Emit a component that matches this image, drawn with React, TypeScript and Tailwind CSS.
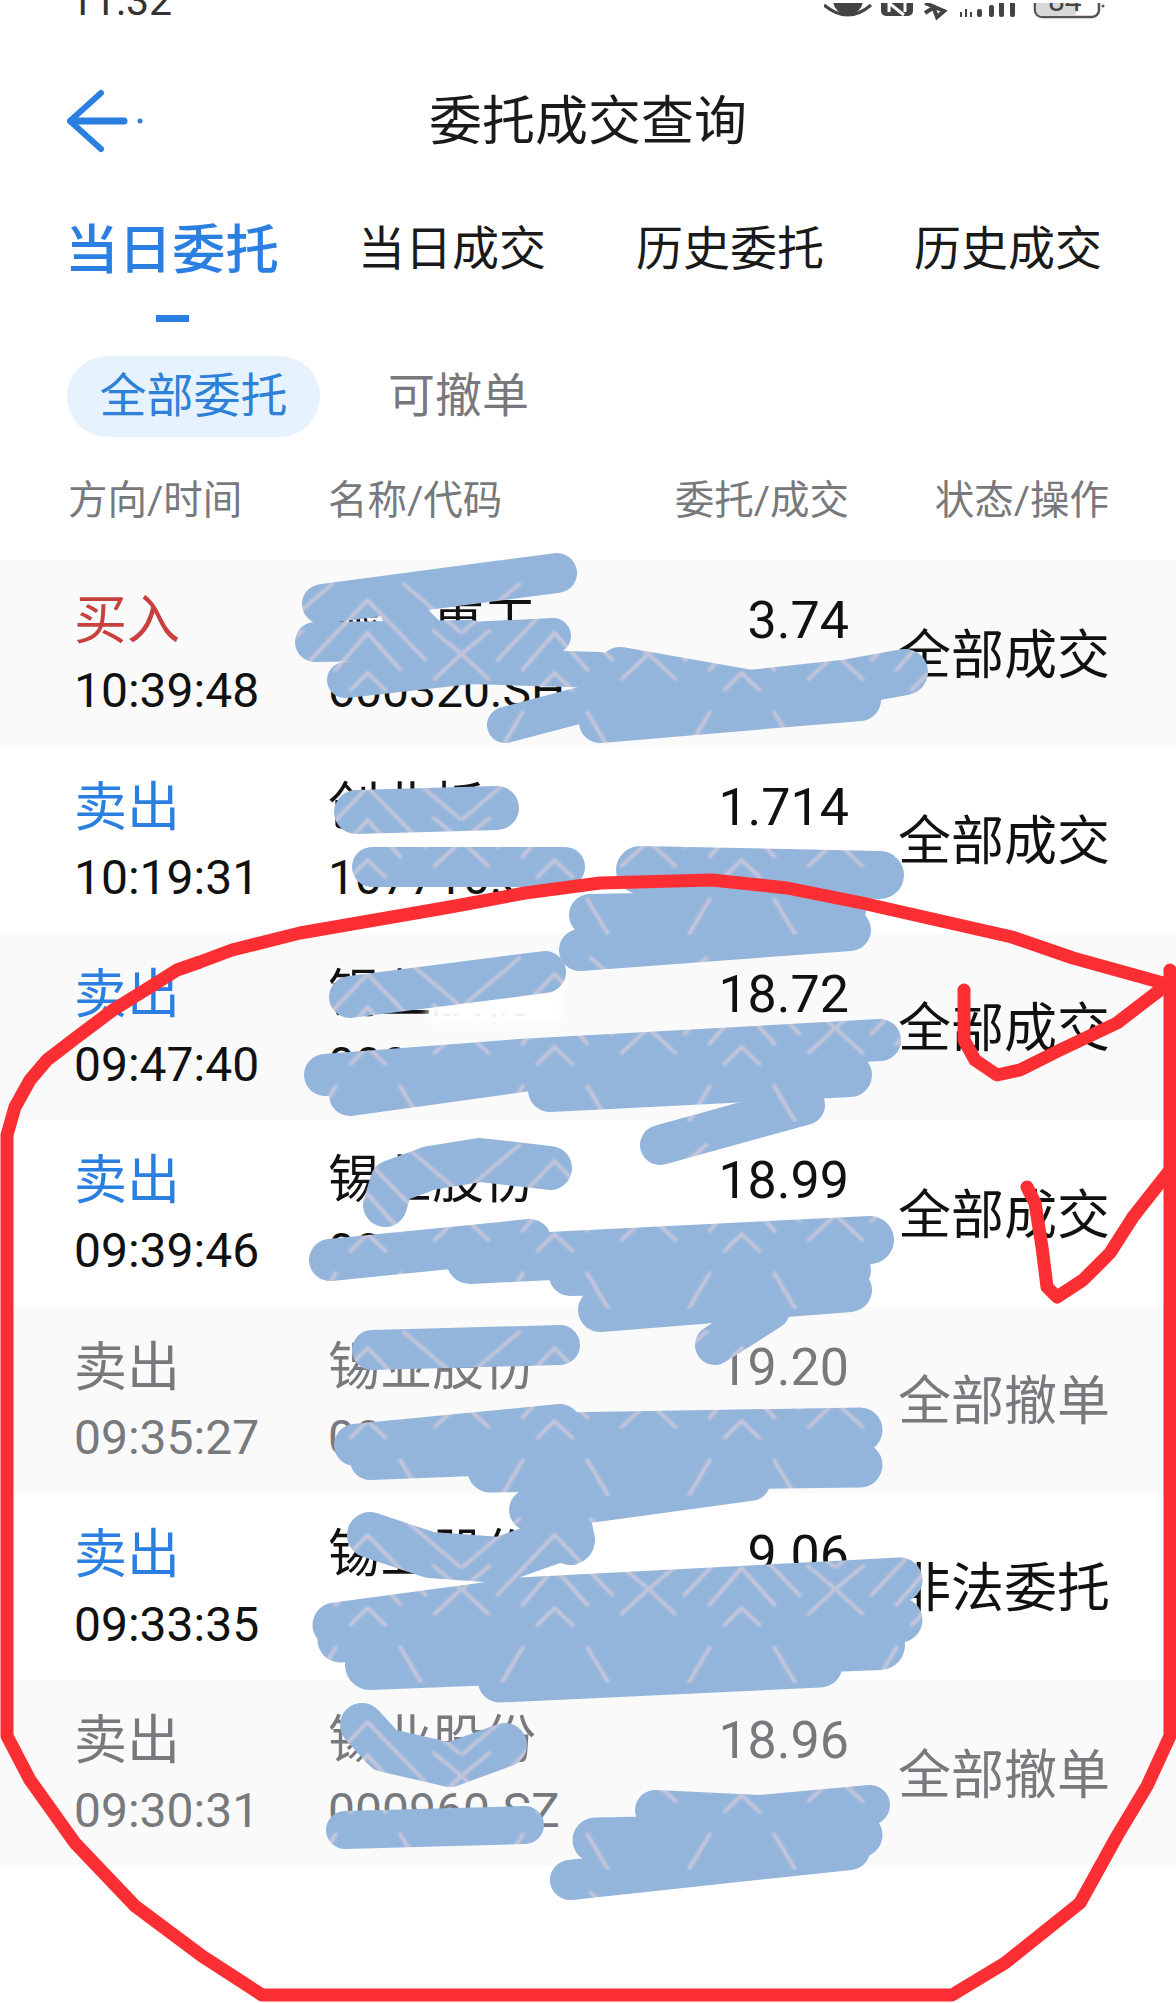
const rows = [
  { dir: '买入', time: '10:39:48', name: '振华重工', code: '600320.SH', price: '3.74', qty: '0', status: '全部成交', tone: 'buy' },
  { dir: '卖出', time: '10:19:31', name: '创业板', code: '107710.SZ', price: '1.714', qty: '100', status: '全部成交', tone: 'sell' },
  { dir: '卖出', time: '09:47:40', name: '锡业股份', code: '000960.SZ', price: '18.72', qty: '100', status: '全部成交', tone: 'sell', blur: true },
  { dir: '卖出', time: '09:39:46', name: '锡业股份', code: '000960.SZ', price: '18.99', qty: '100', status: '全部成交', tone: 'sell' },
  { dir: '卖出', time: '09:35:27', name: '锡业股份', code: '000960.SZ', price: '19.20', qty: '0', status: '全部撤单', tone: 'off' },
  { dir: '卖出', time: '09:33:35', name: '锡业股份', code: '000960.SZ', price: '9.06', qty: '0', status: '非法委托', tone: 'sell' },
  { dir: '卖出', time: '09:30:31', name: '锡业股份', code: '000960.SZ', price: '18.96', qty: '0', status: '全部撤单', tone: 'off' },
]

// painted-over strokes: [width, points]
const scribbles: [number, string][] = [
  [40, '322,604 450,587 557,573'],
  [40, '315,642 470,640'],
  [36, '470,640 553,636'],
  [40, '400,610 440,650'],
  [36, '345,680 470,666 600,670'],
  [46, '620,670 750,693 850,682 905,672'],
  [36, '505,725 600,700 640,690'],
  [42, '600,722 860,700'],
  [44, '356,812 497,808'],
  [40, '372,867 565,867'],
  [48, '640,870 880,875'],
  [42, '590,915 845,910'],
  [42, '580,950 850,930'],
  [42, '350,997 545,972'],
  [42, '325,1075 520,1060 880,1040'],
  [42, '350,1095 530,1070'],
  [44, '550,1090 850,1075'],
  [40, '660,1145 805,1105'],
  [44, '385,1205 392,1182 430,1168 480,1160 550,1168'],
  [42, '330,1260 530,1240'],
  [48, '470,1260 870,1240'],
  [42, '570,1275 850,1270'],
  [44, '600,1310 850,1290'],
  [40, '715,1345 770,1310'],
  [40, '372,1350 560,1345'],
  [42, '355,1445 560,1425'],
  [40, '370,1460 500,1455'],
  [45, '560,1435 860,1430'],
  [45, '490,1470 860,1465'],
  [42, '530,1510 750,1480'],
  [46, '370,1535 430,1555 500,1560 570,1535'],
  [50, '570,1540 560,1495'],
  [45, '335,1625 520,1600 900,1580'],
  [45, '340,1640 900,1620'],
  [50, '370,1665 880,1645'],
  [45, '500,1680 820,1665'],
  [44, '362,1725 385,1750 450,1765 505,1745'],
  [38, '345,1830 525,1825'],
  [40, '655,1810 760,1815 870,1805'],
  [45, '595,1840 860,1835'],
  [40, '570,1880 850,1850'],
]

const redLines = [
  '1163,983 1073,958 1012,937 937,920 862,903 787,888 712,880 600,883 525,893 450,907 375,920 300,933 232,950 200,962 177,970 150,987 113,1010 77,1037 47,1060 30,1080 15,1107 7,1135 7,1736 30,1780 75,1843 135,1906 202,1956 262,1995 952,1995 1005,1963 1080,1903 1117,1836 1147,1786 1170,1736 1170,970',
  '1170,1170 1133,1217 1110,1253 1083,1280 1057,1297 1047,1287 1042,1247 1035,1203 1027,1187',
  '1170,980 1160,990 1117,1023 1060,1050 1020,1070 997,1075 975,1060 964,1040 964,990',
]

const toneClass: Record<string, string> = {
  buy: 'text-[#c8413f]',
  sell: 'text-[#2a7fe0]',
  off: 'text-[#77797d]',
}

function StatusIcons() {
  return (
    <svg width="290" height="18" viewBox="0 0 290 18" className="block">
      <circle cx="24" cy="-3" r="15" fill="#444" />
      <path d="M0 2 Q24 22 47 2" fill="none" stroke="#444" stroke-width="3" />
      <rect x="57" y="-12" width="32" height="25" rx="5" fill="#444" />
      <path d="M65 -4 V9 M65 0 L80 12 M81 -4 V9" stroke="#fff" stroke-width="3" fill="none" />
      <path d="M101 0 L120 8 L113 14 L110 6 M101 10 L112 3" stroke="#444" stroke-width="4" fill="none" />
      <path d="M137 9 V14 M142 6 V14 M147 9 V14" stroke="#444" stroke-width="2" />
      <rect x="153" y="6" width="5" height="8" rx="2" fill="#444" />
      <rect x="165" y="2" width="5" height="12" rx="2" fill="#444" />
      <rect x="175" y="-2" width="5" height="16" rx="2" fill="#444" />
      <rect x="186" y="-2" width="5" height="16" rx="2" fill="#444" />
      <rect x="211" y="-14" width="64" height="28" rx="7" fill="none" stroke="#555" stroke-width="2.5" />
      <rect x="212" y="-12" width="41" height="25" rx="6" fill="#d8d8d8" />
      <text x="224" y="8" fontSize="30" fill="#444" fontFamily="Roboto, sans-serif">84</text>
      <circle cx="279" cy="3" r="1.5" fill="#555" />
    </svg>
  )
}

function BackArrow() {
  return (
    <svg width="76" height="64" viewBox="0 0 76 64" className="block">
      <path d="M34 4 L3 32 L34 60" fill="none" stroke="#2a7fe0" stroke-width="6" stroke-linecap="round" strokeLinejoin="round" />
      <path d="M4 32 H57" stroke="#2a7fe0" stroke-width="7" stroke-linecap="round" />
      <circle cx="73" cy="32" r="2.5" fill="#2a7fe0" />
    </svg>
  )
}

export default function App() {
  return (
    <div className="relative w-[1176px] h-[2003px] overflow-hidden bg-white font-['Roboto','Noto_Sans_CJK_SC',sans-serif]">
      {/* status bar, cut off by the crop */}
      <div className="h-[40px] overflow-hidden flex justify-between pl-[70px] pr-[62px]">
        <span className="-mt-[20px] text-[41px] leading-[42px] text-[#333]">11:32</span>
        <div className="mt-[3px]">
          <StatusIcons />
        </div>
      </div>

      <div className="h-[162px] flex items-center pl-[67px] pr-[143px]">
        <BackArrow />
        <h1 className="flex-1 pt-[4px] text-center text-[53px] font-normal text-[#1a1a1a]">委托成交查询</h1>
      </div>

      <div className="h-[94px] flex items-center pl-[65px]">
        <span className="pt-[4px] text-[53.5px] font-medium text-[#2a7fe0]">当日委托</span>
        <span className="ml-[79px] text-[47px] text-[#1a1a1a]">当日成交</span>
        <span className="ml-[90px] text-[47px] text-[#1a1a1a]">历史委托</span>
        <span className="ml-[90px] text-[47px] text-[#1a1a1a]">历史成交</span>
      </div>
      <div className="mt-[19px] ml-[156px] w-[33px] h-[7px] bg-[#2a7fe0]" />

      <div className="mt-[34px] flex items-center pl-[67px]">
        <span className="h-[81px] w-[253px] rounded-full bg-[#e6f2fd] flex items-center justify-center text-[47px] text-[#2f80d8]">全部委托</span>
        <span className="ml-[68px] text-[47px] text-[#77797d]">可撤单</span>
      </div>

      <div className="h-[123px] flex items-center pt-[5px] pl-[68px] pr-[67px] text-[39.5px] text-[#77797d]">
        <span className="w-[260px]">方向/时间</span>
        <span className="w-[300px]">名称/代码</span>
        <span className="w-[221px] text-right">委托/成交</span>
        <span className="flex-1 text-right">状态/操作</span>
      </div>

      <div>
        {rows.map((r, i) => {
          const base = r.tone === 'off' ? 'text-[#77797d]' : 'text-[#111]'
          return (
            <div
              key={r.time}
              className={i % 2 === 0
                ? 'h-[186.7px] flex items-center pt-[6px] pl-[74px] pr-[66px] bg-[#fafafa]'
                : 'h-[186.7px] flex items-center pt-[6px] pl-[74px] pr-[66px] bg-white'}
            >
              <div className="w-[254px] leading-[70px]">
                <div className={`text-[53px] ${toneClass[r.tone]}`}>{r.dir}</div>
                <div className={`text-[48px] ${base}`}>{r.time}</div>
              </div>
              <div className={`relative w-[300px] leading-[70px] ${base}`}>
                <div className="text-[52px]">{r.name}</div>
                <div className="text-[48px]">{r.code}</div>
                {r.blur && <div className="absolute left-[100px] top-[4px] w-[135px] h-[58px] bg-white blur-[5px]" />}
              </div>
              <div className={`w-[221px] text-right leading-[70px] ${base}`}>
                <div className="text-[52px]">{r.price}</div>
                <div className="text-[48px]">{r.qty}</div>
              </div>
              <div className={`flex-1 text-right text-[53px] ${base}`}>{r.status}</div>
            </div>
          )
        })}
      </div>

      {/* hand-drawn markup on top of the screenshot */}
      <svg width="1176" height="2003" viewBox="0 0 1176 2003" className="absolute inset-0 pointer-events-none">
        <defs>
          <filter id="soft" x="-5%" y="-5%" width="110%" height="110%">
            <feGaussianBlur stdDeviation="0.8" />
          </filter>
          <pattern id="paint" patternUnits="userSpaceOnUse" x="87.5" y="0" width="187" height="187">
            <rect width="187" height="187" fill="#93b5dc" />
            <g filter="url(#soft)" fill="none" stroke="#dccdd9" strokeWidth="3.5" opacity="0.75">
              <path d="M35 100 L93 39 L152 100" />
              <path d="M60 110 L93 72 L127 110" />
              <path d="M75 130 L93 112 L112 130" />
              <path d="M128 22 L187 72 M59 22 L0 72" />
              <path d="M158 69 L187 93 M29 69 L0 93" />
              <path d="M0 93 L28 119 M187 93 L159 119" />
              <path d="M40 187 L62 150 M147 187 L125 150" />
            </g>
          </pattern>
        </defs>
        {scribbles.map(([w, pts], i) => (
          <polyline key={i} points={pts} fill="none" stroke="url(#paint)" strokeWidth={w} strokeLinecap="round" strokeLinejoin="round" />
        ))}
        {redLines.map((pts, i) => (
          <polyline key={i} points={pts} fill="none" stroke="#fb2f33" strokeWidth={13} strokeLinecap="round" strokeLinejoin="round" />
        ))}
      </svg>
    </div>
  )
}
